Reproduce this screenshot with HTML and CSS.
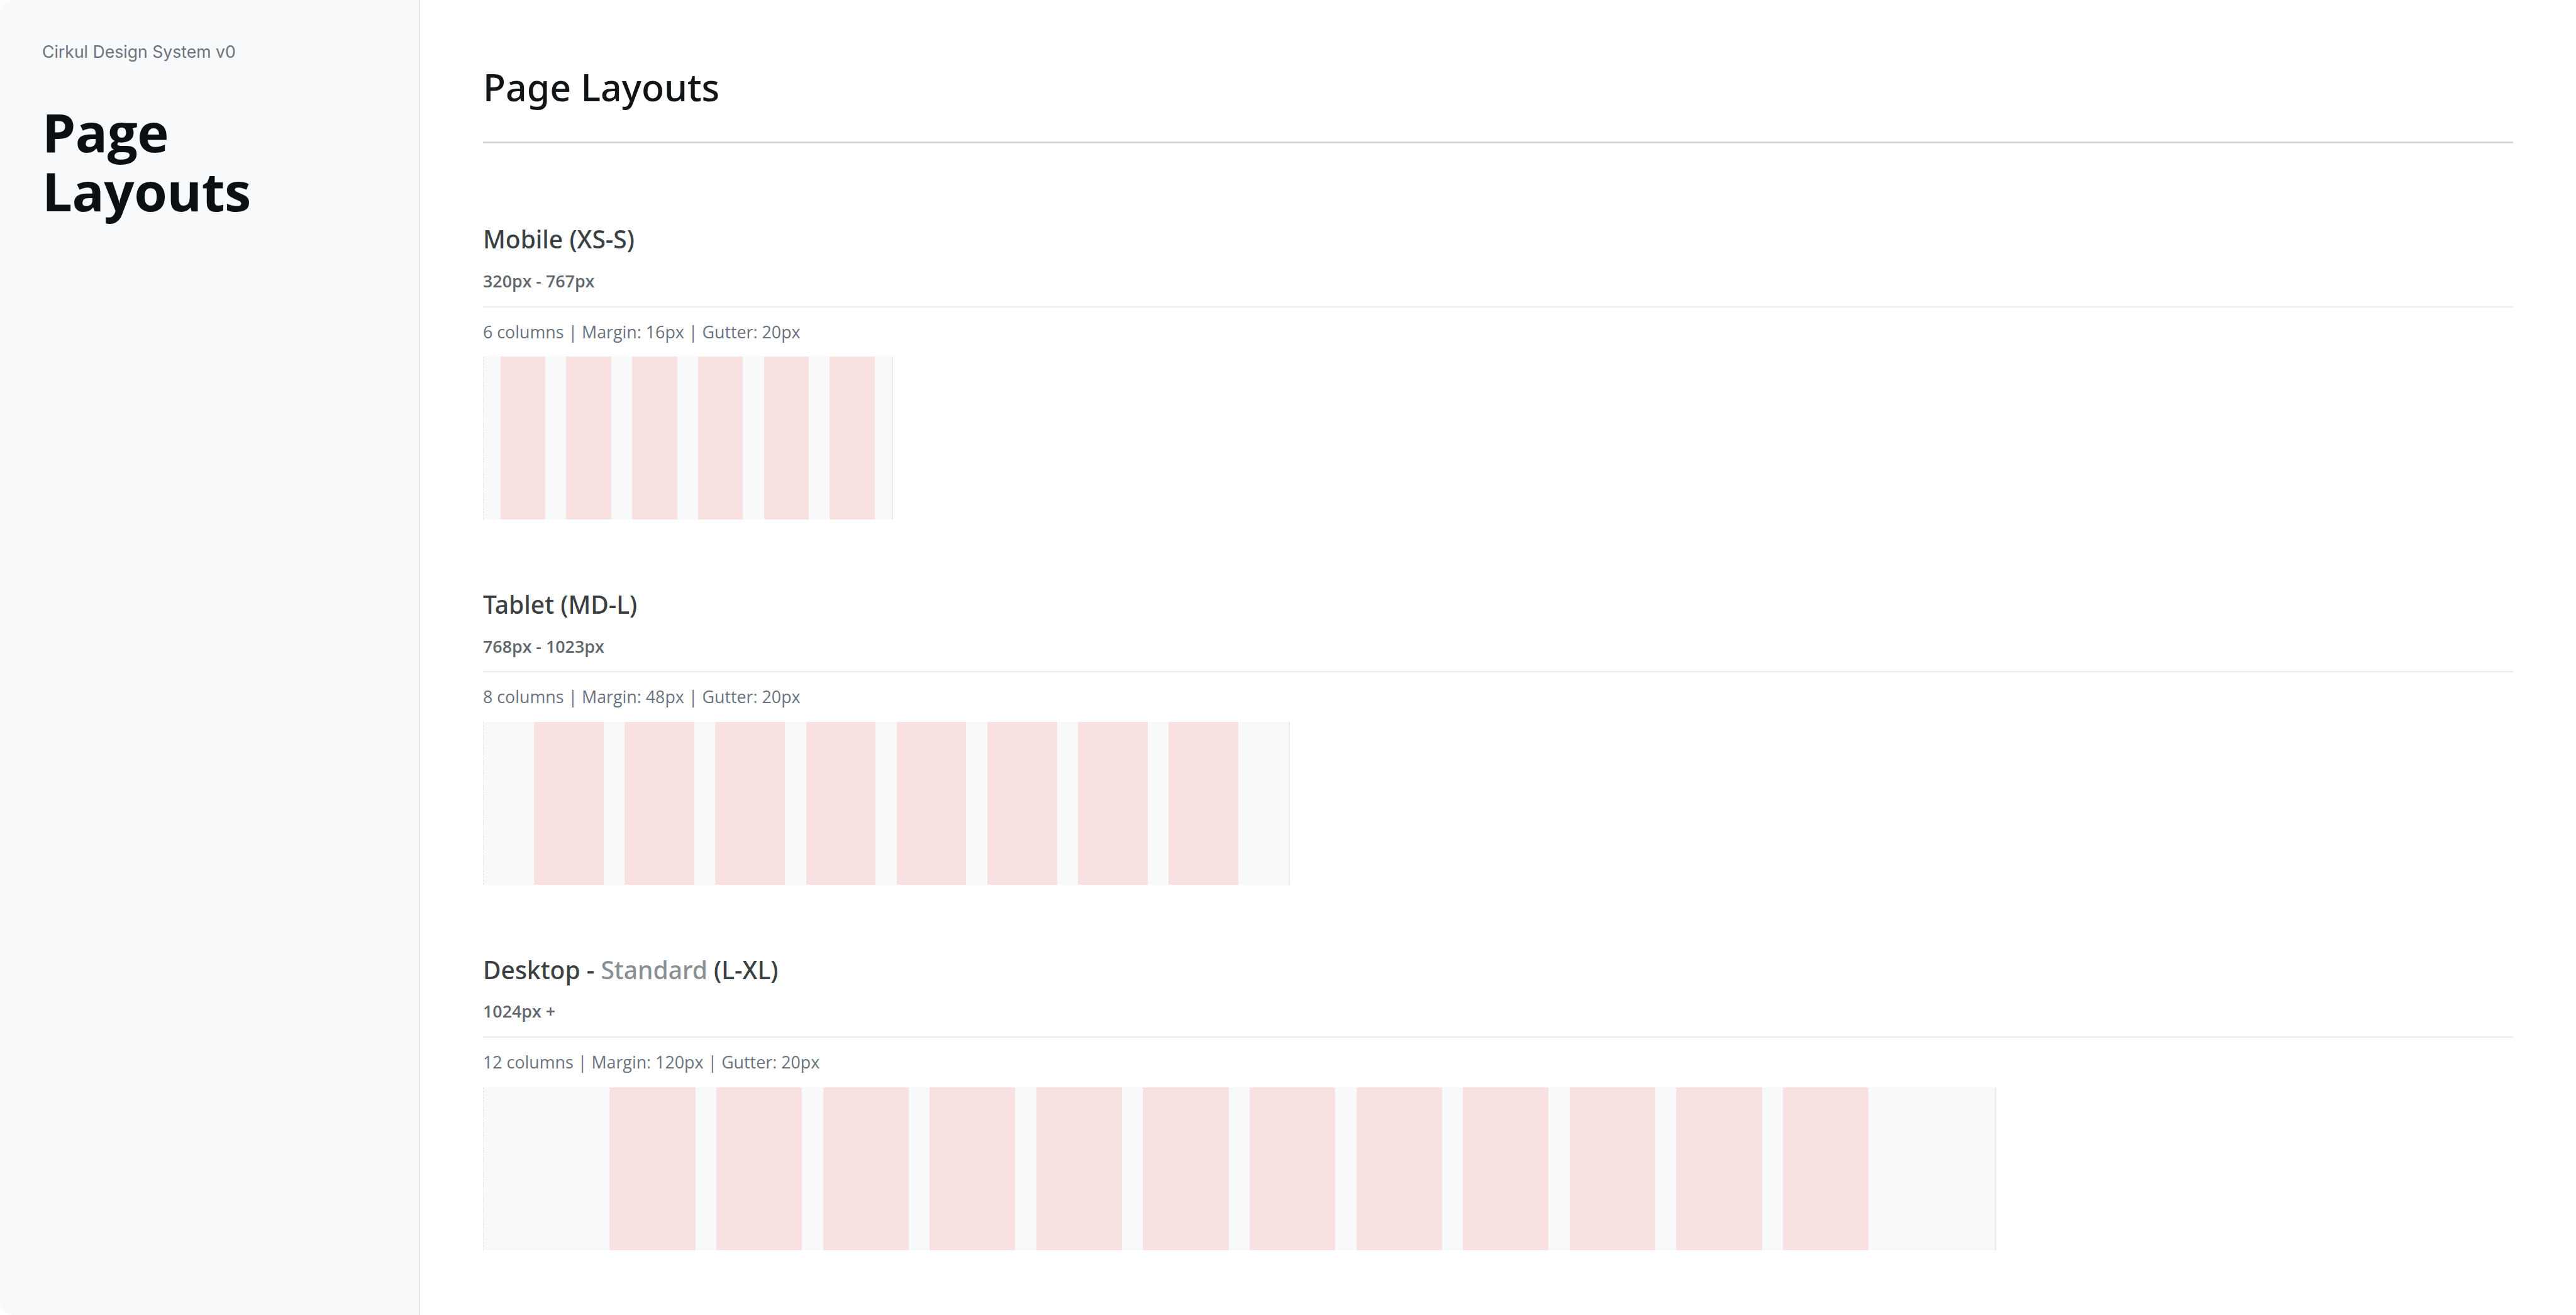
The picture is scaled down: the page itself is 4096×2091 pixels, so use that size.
FILE: index.html
```html
<!DOCTYPE html>
<html lang="en">
<head>
<meta charset="utf-8">
<title>Page Layouts – Cirkul Design System v0</title>
<link rel="stylesheet" href="styles.css">
</head>
<body>
<div class="app">
  <aside class="sidebar">
    <p class="brand">Cirkul Design System v0</p>
    <h1 class="side-title">Page<br>Layouts</h1>
  </aside>
  <main class="main">
    <header class="page-header">
      <h2 class="page-title">Page Layouts</h2>
    </header>

    <section class="layout">
      <h3 class="layout-title">Mobile (XS-S)</h3>
      <p class="layout-range">320px - 767px</p>
      <p class="layout-spec">6 columns | Margin: 16px | Gutter: 20px</p>
      <div class="grid grid-mobile">
        <span class="col"></span><span class="col"></span><span class="col"></span>
        <span class="col"></span><span class="col"></span><span class="col"></span>
      </div>
    </section>

    <section class="layout">
      <h3 class="layout-title">Tablet (MD-L)</h3>
      <p class="layout-range">768px - 1023px</p>
      <p class="layout-spec">8 columns | Margin: 48px | Gutter: 20px</p>
      <div class="grid grid-tablet">
        <span class="col"></span><span class="col"></span><span class="col"></span><span class="col"></span>
        <span class="col"></span><span class="col"></span><span class="col"></span><span class="col"></span>
      </div>
    </section>

    <section class="layout">
      <h3 class="layout-title">Desktop - <span class="muted">Standard</span> (L-XL)</h3>
      <p class="layout-range">1024px +</p>
      <p class="layout-spec">12 columns | Margin: 120px | Gutter: 20px</p>
      <div class="grid grid-desktop">
        <span class="col"></span><span class="col"></span><span class="col"></span><span class="col"></span>
        <span class="col"></span><span class="col"></span><span class="col"></span><span class="col"></span>
        <span class="col"></span><span class="col"></span><span class="col"></span><span class="col"></span>
      </div>
    </section>
  </main>
</div>
</body>
</html>
```

FILE: styles.css
```css
* { box-sizing: border-box; }

html, body {
  margin: 0;
  padding: 0;
  background: #ffffff;
}

body {
  font-family: "Open Sans", "Noto Sans", sans-serif;
}

.app {
  display: flex;
  height: 100vh;
  border-radius: 22px;
  overflow: hidden;
  background: #ffffff;
}

/* ---------- Sidebar ---------- */
.sidebar {
  flex: 0 0 668px;
  background: #f8f9fb;
  border-right: 1px solid #d3d6da;
  padding: 64px 67px;
}

.brand {
  margin: 0;
  font-family: Inter, "Liberation Sans", sans-serif;
  font-size: 26.6px;
  line-height: 36.4px;
  color: #6b7280;
}

.side-title {
  margin: 62px 0 0;
  font-family: "Open Sans", "Noto Sans", sans-serif;
  font-weight: 700;
  font-size: 85px;
  line-height: 94px;
  color: #0b1014;
  letter-spacing: -0.5px;
}

/* ---------- Main ---------- */
.main {
  flex: 1 1 auto;
  padding: 101px 100px 40px;
  display: flex;
  flex-direction: column;
  gap: 108px;
}

.page-header {
  padding-bottom: 50px;
  border-bottom: 3px solid #d6d9dc;
  margin-bottom: 17px;
}

.page-title {
  margin: 0;
  font-family: "Noto Sans", "Open Sans", sans-serif;
  font-size: 59px;
  line-height: 74.4px;
  font-weight: 500;
  color: #111518;
}

.layout {
  display: flex;
  flex-direction: column;
  align-items: flex-start;
}

.layout-title {
  margin: 0;
  font-family: "Noto Sans", "Open Sans", sans-serif;
  font-size: 39px;
  line-height: 53.3px;
  font-weight: 500;
  color: #3b4043;
}

.layout-title .muted {
  color: #8a8f94;
}

.layout-range {
  align-self: stretch;
  margin: 23px 0 0;
  padding-bottom: 23px;
  border-bottom: 2px solid #eaebef;
  font-size: 26.8px;
  line-height: 33.8px;
  font-weight: 600;
  color: #5f666d;
}

.layout-spec {
  margin: 22px 0 0;
  font-size: 26.8px;
  line-height: 33.8px;
  font-weight: 400;
  color: #6b7280;
}

/* ---------- Grid previews ---------- */
.grid {
  --s: 1.6706px;
  margin-top: 23px;
  height: 259px;
  width: calc(var(--w) * var(--s));
  padding: 0 calc(var(--m) * var(--s));
  display: flex;
  gap: calc(20 * var(--s));
  background: #f8f9fb;
  border-left: 1px dashed #e2e4e9;
  border-right: 2px solid #e8e9ed;
}

.grid-mobile  { --w: 390;  --m: 16; }
.grid-tablet  { --w: 768;  --m: 48; }
.grid-desktop { --w: 1440; --m: 120; }

.col {
  flex: 1 1 0;
  background: #f9e1e2;
}
```
